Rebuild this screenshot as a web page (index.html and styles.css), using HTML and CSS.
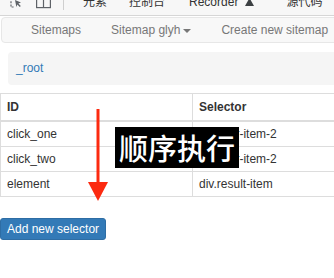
FILE: index.html
```html
<!DOCTYPE html>
<html lang="zh">
<head>
<meta charset="utf-8">
<title>Web Scraper</title>
<link rel="stylesheet" href="styles.css">
</head>
<body>
<div class="devtools">
  <span class="dt-icon dt-inspect">
    <svg width="12" height="12" viewBox="0 0 12 12"><path d="M1 1v9h3" fill="none" stroke="#5f6368" stroke-width="1.2" stroke-dasharray="2 1.2"/><path d="M5 3l6 2.5-2.6 1 2.4 2.4-1 1-2.4-2.4-1 2.6z" fill="#5f6368"/></svg>
  </span>
  <span class="dt-icon dt-device">
    <svg width="15" height="12" viewBox="0 0 15 12"><rect x="0.6" y="0.6" width="13.8" height="10" fill="none" stroke="#5f6368" stroke-width="1.2"/><path d="M7.5 0.6v10" stroke="#5f6368" stroke-width="1.2"/></svg>
  </span>
  <span class="dt-sep"></span>
  <span class="dt-tab t1">元素</span>
  <span class="dt-tab t2">控制台</span>
  <span class="dt-tab t3">Recorder<svg class="tri" width="9" height="8" viewBox="0 0 9 8"><path d="M4.5 0L9 8H0z" fill="#3c4043"/></svg></span>
  <span class="dt-tab t4">源代码</span>
</div>

<div class="page">
  <nav class="navbar">
    <ul class="nav">
      <li class="nav-item">Sitemaps</li>
      <li class="nav-item">Sitemap glyh<span class="caret"></span></li>
      <li class="nav-item">Create new sitemap</li>
    </ul>
  </nav>

  <ol class="breadcrumb">
    <li><a class="crumb" href="#">_root</a></li>
  </ol>

  <table class="selectors">
    <thead>
      <tr><th class="col-id">ID</th><th>Selector</th></tr>
    </thead>
    <tbody>
      <tr><td>click_one</td><td>div.filter-item-2</td></tr>
      <tr><td>click_two</td><td>div.filter-item-2</td></tr>
      <tr><td>element</td><td>div.result-item</td></tr>
    </tbody>
  </table>

  <button class="btn-primary" type="button">Add new selector</button>

  <div class="label-overlay">顺序执行</div>
  <svg class="arrow" width="24" height="96" viewBox="0 0 24 96">
    <path d="M12 2V76" stroke="#fc2a10" stroke-width="3"/>
    <path d="M2 75H22L12 94z" fill="#fc2a10"/>
  </svg>
</div>
</body>
</html>
```

FILE: styles.css
```css
* { box-sizing: border-box; }
html, body {
  margin: 0;
  padding: 0;
  overflow: hidden;
  background: #fff;
}
body {
  width: 334px;
  height: 278px;
  font-family: "Liberation Sans", Arial, "Noto Sans CJK SC", sans-serif;
  font-size: 12px;
  color: #333;
}

/* devtools strip */
.devtools {
  height: 16px;
  background: #f7f7f7;
  border-bottom: 1px solid #d6d6d6;
  display: flex;
  align-items: flex-start;
  overflow: hidden;
  font-family: "Liberation Sans", "Noto Sans CJK SC", sans-serif;
  color: #333;
}
.dt-icon { display: block; margin-top: -3px; height: 12px; }
.dt-icon svg { display: block; }
.dt-inspect { margin-left: 10px; width: 12px; }
.dt-device { margin-left: 14px; width: 15px; }
.dt-sep {
  display: block;
  width: 1px;
  height: 10px;
  background: #cfcfcf;
  margin-left: 12px;
}
.dt-tab {
  display: flex;
  align-items: center;
  line-height: 12px;
  margin-top: -4px;
  font-size: 12px;
  white-space: nowrap;
}
.t1 { margin-left: 19px; }
.t2 { margin-left: 22px; }
.t3 { margin-left: 24px; }
.t4 { margin-left: 32px; }
.tri { margin-left: 7px; display: block; }

/* page */
.page {
  position: relative;
  padding-top: 1px;
}

.navbar {
  margin-left: 1px;
  width: 360px;
  height: 26px;
  background: #f8f8f8;
  border: 1px solid #e7e7e7;
  border-radius: 4px;
}
.nav {
  list-style: none;
  margin: 0;
  padding: 0 0 0 14px;
  display: flex;
  white-space: nowrap;
}
.nav-item {
  padding: 0 15px;
  line-height: 24px;
  color: #777;
  display: flex;
  align-items: center;
}
.caret {
  display: inline-block;
  width: 0;
  height: 0;
  margin-left: 3px;
  margin-top: 1px;
  border-top: 4px solid #777;
  border-left: 4px solid transparent;
  border-right: 4px solid transparent;
}

.breadcrumb {
  list-style: none;
  margin: 9px 0 0 8px;
  padding: 8px 8px;
  height: 33px;
  line-height: 17px;
  background: #f5f5f5;
  border-radius: 4px 0 0 4px;
}
.crumb {
  color: #337ab7;
  text-decoration: none;
}

.selectors {
  margin-top: 8px;
  width: 420px;
  border-collapse: collapse;
  border-spacing: 0;
}
.selectors th,
.selectors td {
  border: 1px solid #ddd;
  padding: 4px 6px;
  line-height: 16px;
  text-align: left;
  vertical-align: top;
  white-space: nowrap;
}
.selectors th {
  padding: 5px 6px;
  font-weight: bold;
  border-bottom: 2px solid #ddd;
}
.col-id { width: 192px; }

.btn-primary {
  display: block;
  margin-top: 21px;
  height: 22px;
  padding: 1px 6px;
  font-family: "Liberation Sans", Arial, sans-serif;
  font-size: 12px;
  line-height: 18px;
  color: #fff;
  background: #337ab7;
  border: 1px solid #2e6da4;
  border-radius: 3px;
}

.label-overlay {
  position: absolute;
  left: 115px;
  top: 111px;
  width: 124px;
  height: 41px;
  background: #000;
  color: #fff;
  font-family: "Noto Sans CJK SC", sans-serif;
  font-weight: 500;
  font-size: 29px;
  line-height: 41px;
  text-align: center;
  white-space: nowrap;
}
.arrow {
  position: absolute;
  left: 86px;
  top: 91px;
}
```
